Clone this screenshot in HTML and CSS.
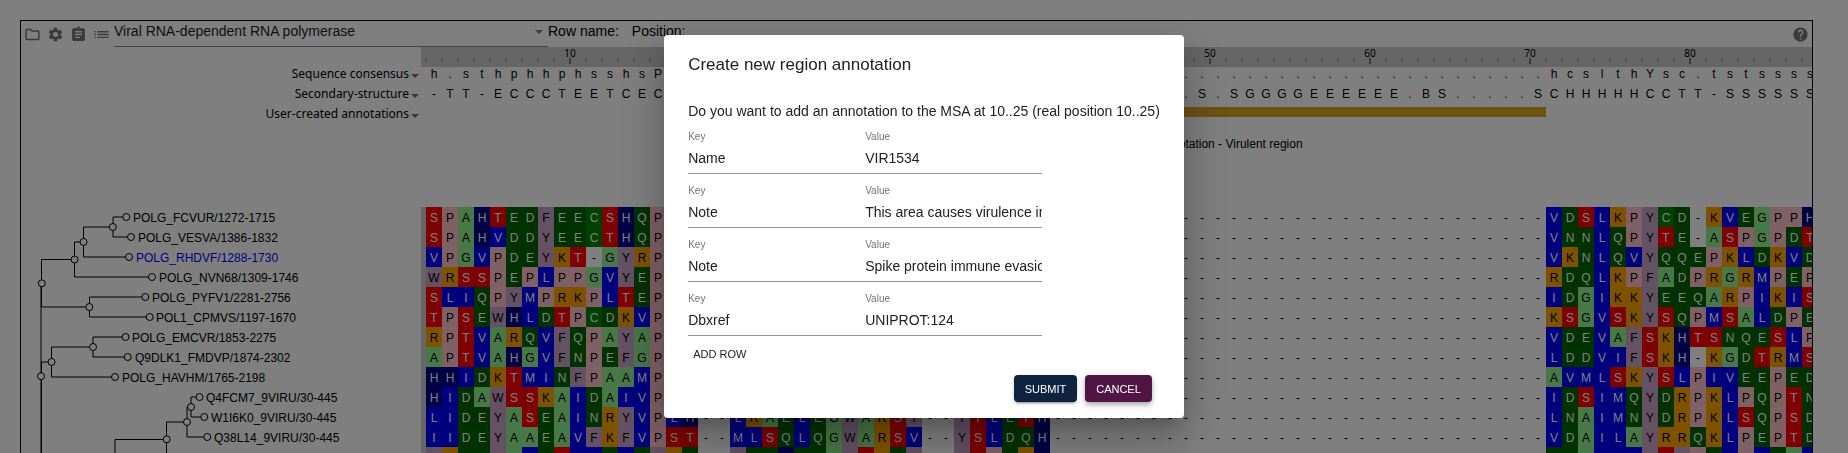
FILE: index.html
```html
<!DOCTYPE html>
<html lang="en">
<head>
<meta charset="utf-8">
<title>MSA viewer</title>
<link rel="stylesheet" href="styles.css">
</head>
<body>
<main class="viewer">
  <header class="toolbar">
    <button class="icon-btn" aria-label="Open"><svg viewBox="0 0 24 24"><path d="M9.17 6l2 2H20v10H4V6h5.17M10 4H4c-1.1 0-1.99.9-1.99 2L2 18c0 1.1.9 2 2 2h16c1.1 0 2-.9 2-2V8c0-1.1-.9-2-2-2h-8l-2-2z"/></svg></button>
    <button class="icon-btn" aria-label="Settings"><svg viewBox="0 0 24 24"><path d="M19.14 12.94c.04-.3.06-.61.06-.94 0-.32-.02-.64-.07-.94l2.03-1.58c.18-.14.23-.41.12-.61l-1.92-3.32c-.12-.22-.37-.29-.59-.22l-2.39.96c-.5-.38-1.03-.7-1.62-.94l-.36-2.54c-.04-.24-.24-.41-.48-.41h-3.84c-.24 0-.43.17-.47.41l-.36 2.54c-.59.24-1.13.57-1.62.94l-2.39-.96c-.22-.08-.47 0-.59.22L2.74 8.87c-.12.21-.08.47.12.61l2.03 1.58c-.05.3-.09.63-.09.94s.02.64.07.94l-2.03 1.58c-.18.14-.23.41-.12.61l1.92 3.32c.12.22.37.29.59.22l2.39-.96c.5.38 1.03.7 1.62.94l.36 2.54c.05.24.24.41.48.41h3.84c.24 0 .44-.17.47-.41l.36-2.54c.59-.24 1.13-.56 1.62-.94l2.39.96c.22.08.47 0 .59-.22l1.92-3.32c.12-.22.07-.47-.12-.61l-2.01-1.58zM12 15.6c-1.98 0-3.6-1.62-3.6-3.6s1.62-3.6 3.6-3.6 3.6 1.62 3.6 3.6-1.62 3.6-3.6 3.6z"/></svg></button>
    <button class="icon-btn" aria-label="Details"><svg viewBox="0 0 24 24"><path d="M19 3h-4.18C14.4 1.84 13.3 1 12 1c-1.3 0-2.4.84-2.82 2H5c-1.1 0-2 .9-2 2v14c0 1.1.9 2 2 2h14c1.1 0 2-.9 2-2V5c0-1.1-.9-2-2-2zm-7 0c.55 0 1 .45 1 1s-.45 1-1 1-1-.45-1-1 .45-1 1-1zm2 14H7v-2h7v2zm3-4H7v-2h10v2zm0-4H7V7h10v2z"/></svg></button>
    <button class="icon-btn" aria-label="Tracks"><svg viewBox="0 0 24 24"><path d="M2 13h2v-2H2v2zm0 4h2v-2H2v2zm0-8h2V7H2v2zm4 4h16v-2H6v2zm0 4h16v-2H6v2zM6 7v2h16V7H6z"/></svg></button>
    <div class="picker">
      <select aria-label="Alignment"><option>Viral RNA-dependent RNA polymerase</option></select>
      <svg class="caret" viewBox="0 0 8 4"><path d="M0 0h8L4 4z"/></svg>
    </div>
    <div class="status"><span>Row name:</span><span>Position:</span></div>
    <button class="icon-btn" aria-label="Help"><svg viewBox="0 0 24 24"><path d="M12 2C6.48 2 2 6.48 2 12s4.48 10 10 10 10-4.48 10-10S17.52 2 12 2zm1 17h-2v-2h2v2zm2.07-7.75l-.9.92C13.45 12.9 13 13.5 13 15h-2v-.5c0-1.1.45-2.1 1.17-2.83l1.24-1.26c.37-.36.59-.86.59-1.41 0-1.1-.9-2-2-2s-2 .9-2 2H8c0-2.21 1.79-4 4-4s4 1.79 4 4c0 .88-.36 1.68-.93 2.25z"/></svg></button>
  </header>

  <div class="panes">
    <section class="side">
      <div class="track-label">Sequence consensus<svg class="caret" viewBox="0 0 8 4"><path d="M0 0h8L4 4z"/></svg></div>
      <div class="track-label">Secondary-structure<svg class="caret" viewBox="0 0 8 4"><path d="M0 0h8L4 4z"/></svg></div>
      <div class="track-label">User-created annotations<svg class="caret" viewBox="0 0 8 4"><path d="M0 0h8L4 4z"/></svg></div>
      <svg class="tree" viewBox="21 127 400 340">
        <g class="branches">
          <path d="M126 217H113V237H131M113 227H83.5V257H129M83.5 242H74.5V277H152M74.5 259.5H41.5V307H89.5M145 297H89.5V317H150"/>
          <path d="M125.5 337H93V357H128M93 347H51.5V377H115M51.5 362H41.5V467M41 283V467"/>
          <path d="M199.5 397H191V417H204M191 407H187V437H207M187 422H166.5V467M166.5 439.5H115V467"/>
        </g>
        <g class="nodes">
          <circle cx="126.3" cy="217" r="3.5"/><circle cx="131" cy="237" r="3.5"/><circle cx="129" cy="257" r="3.5"/>
          <circle cx="152" cy="277" r="3.5"/><circle cx="145.3" cy="297" r="3.5"/><circle cx="149.7" cy="317" r="3.5"/>
          <circle cx="125.5" cy="337" r="3.5"/><circle cx="127.7" cy="357" r="3.5"/><circle cx="115" cy="377" r="3.5"/>
          <circle cx="199.5" cy="397" r="3.5"/><circle cx="204.3" cy="417" r="3.5"/><circle cx="207.3" cy="437" r="3.5"/>
          <circle cx="112.8" cy="227" r="3.5"/><circle cx="83.5" cy="242" r="3.5"/><circle cx="74.6" cy="259.5" r="3.5"/>
          <circle cx="41.8" cy="283.3" r="3.5"/><circle cx="89.3" cy="307" r="3.5"/><circle cx="93" cy="347" r="3.5"/>
          <circle cx="51.5" cy="362" r="3.5"/><circle cx="41" cy="376.2" r="3.5"/><circle cx="191" cy="407" r="3.5"/>
          <circle cx="187" cy="422" r="3.5"/><circle cx="166.7" cy="439.3" r="3.5"/>
        </g>
        <g class="leaves">
          <text x="133" y="222">POLG_FCVUR/1272-1715</text>
          <text x="138" y="242">POLG_VESVA/1386-1832</text>
          <text x="136" y="262" class="active">POLG_RHDVF/1288-1730</text>
          <text x="159" y="282">POLG_NVN68/1309-1746</text>
          <text x="152" y="302">POLG_PYFV1/2281-2756</text>
          <text x="156" y="322">POL1_CPMVS/1197-1670</text>
          <text x="132" y="342">POLG_EMCVR/1853-2275</text>
          <text x="135" y="362">Q9DLK1_FMDVP/1874-2302</text>
          <text x="122" y="382">POLG_HAVHM/1765-2198</text>
          <text x="206" y="402">Q4FCM7_9VIRU/30-445</text>
          <text x="211" y="422">W1I6K0_9VIRU/30-445</text>
          <text x="214" y="442">Q38L14_9VIRU/30-445</text>
        </g>
      </svg>
    </section>
    <section class="alignment">
      <div class="ruler" id="ruler"></div>
      <div class="track" id="consensus"></div>
      <div class="track" id="structure"></div>
      <div class="annotations">
        <div class="region"><div class="region-bar"></div><span>Region annotation - Virulent region</span></div>
      </div>
      <div class="msa" id="msa"></div>
    </section>
  </div>
</main>

<div class="backdrop">
  <form class="dialog" role="dialog" aria-modal="true" aria-labelledby="title">
    <h2 id="title">Create new region annotation</h2>
    <p>Do you want to add an annotation to the MSA at 10..25 (real position 10..25)</p>
    <div class="fields">
      <label>Key<input type="text" value="Name"></label>
      <label>Value<input type="text" value="VIR1534"></label>
      <label>Key<input type="text" value="Note"></label>
      <label>Value<input type="text" value="This area causes virulence in host"></label>
      <label>Key<input type="text" value="Note"></label>
      <label>Value<input type="text" value="Spike protein immune evasion"></label>
      <label>Key<input type="text" value="Dbxref"></label>
      <label>Value<input type="text" value="UNIPROT:124"></label>
    </div>
    <button type="button" class="btn text">ADD ROW</button>
    <div class="actions">
      <button type="button" class="btn primary">SUBMIT</button>
      <button type="button" class="btn secondary">CANCEL</button>
    </div>
  </form>
</div>
<script src="msa.js"></script>
</body>
</html>
```
FILE: styles.css
```css
* { box-sizing: border-box; }
body {
  margin: 0;
  background: #fff;
  color: #000;
  font: 14px/20px "Liberation Sans", Arial, sans-serif;
}
button, input, select { font: inherit; color: inherit; margin: 0; padding: 0; border: 0; background: none; }

.viewer {
  height: calc(100vh - 20px);
  margin: 20px 35px 0 20px;
  border: 1px solid #000;
  border-bottom: 0;
  overflow: hidden;
}

.toolbar { display: flex; height: 26px; }
.icon-btn { width: 23px; height: 26px; display: flex; align-items: center; justify-content: center; }
.icon-btn svg { width: 17px; height: 17px; fill: #757575; }
.picker { position: relative; width: 434px; margin-left: 1px; border-bottom: 1px solid #8a8a8a; }
.picker select { width: 100%; height: 20px; appearance: none; color: #212121; }
.picker .caret { position: absolute; right: 5px; top: 9px; }
.caret { width: 8px; height: 4px; fill: #757575; }
.status { flex: 1; display: flex; gap: 13px; line-height: 20px; }

.panes { display: grid; grid-template-columns: 400px minmax(0, 1fr); }
.side { padding-top: 20px; }
.track-label {
  display: flex;
  justify-content: flex-end;
  gap: 2px;
  height: 20px;
  padding-right: 2px;
  font: 12px/14px "Noto Sans", sans-serif;
}
.track-label .caret { margin-top: 7px; }
.tree { display: block; width: 400px; height: 340px; }
.branches { fill: none; stroke: #000; }
.nodes { fill: #fff; stroke: #000; }
.leaves { font-size: 12px; }
.active { fill: #00f; }

.alignment { overflow: hidden; }
.ruler { display: flex; height: 20px; padding-left: 4px; background: #ccc; }
.tick {
  position: relative;
  flex: none;
  width: 16px;
  margin-top: 11px;
  height: 4px;
  border-left: 2px solid #aaa;
}
.tick.major { height: 6px; border-color: #777; }
.tick span {
  position: absolute;
  left: -17px;
  top: -11px;
  width: 32px;
  text-align: center;
  font: 10px/12px "Noto Sans", sans-serif;
}
.track, .row { display: flex; height: 20px; font-size: 12px; line-height: 22px; }
.track { padding-left: 5px; line-height: 14px; }
.cell { flex: none; width: 16px; text-align: center; }
.annotations { height: 100px; padding-left: 453px; }
.region { width: 672px; text-align: center; font-size: 12px; }
.region-bar { height: 10px; margin-bottom: 17px; background: #daa520; }
.msa { border-left: 5px solid #ccc; }

.ag { background: #90ee90; }
.c { background: #008000; }
.denq { background: #006400; }
.ilmv { background: #00f; }
.fwy { background: #c8a2c8; }
.h { background: #00008b; }
.kr { background: #ffa500; }
.p { background: #ffc0cb; }
.st { background: #f00; }
.c, .denq, .ilmv, .h, .st { color: #fff; }

.backdrop {
  position: fixed;
  inset: 0;
  display: flex;
  align-items: center;
  justify-content: center;
  background: rgba(0, 0, 0, .5);
}
.dialog {
  padding: 0 24px 16px;
  border-radius: 4px;
  background: #fff;
  color: #212121;
  box-shadow: 0 11px 15px -7px rgba(0,0,0,.2), 0 24px 38px 3px rgba(0,0,0,.14), 0 9px 46px 8px rgba(0,0,0,.12);
}
.dialog h2 { margin: 0; padding: 18px 0 26px; font-size: 17px; line-height: 24px; font-weight: 400; }
.dialog p { margin: 0; line-height: 17px; }
.fields { display: grid; grid-template-columns: 177px 177px; }
.fields label { padding-top: 11px; font-size: 10px; line-height: 12px; color: #757575; }
.fields input {
  display: block;
  width: 100%;
  height: 31px;
  border-bottom: 1px solid #949494;
  font-size: 14px;
  color: #212121;
}
.btn { height: 27px; padding: 0 11px; border-radius: 4px; font-size: 11px; }
.btn.text { margin-top: 4px; padding: 0 5px; }
.actions { display: flex; justify-content: flex-end; gap: 8px; padding: 8px 8px 0 0; }
.primary, .secondary { color: #fff; box-shadow: 0 3px 1px -2px rgba(0,0,0,.2), 0 2px 2px rgba(0,0,0,.14), 0 1px 5px rgba(0,0,0,.12); }
.primary { background: #0d233f; }
.secondary { background: #501545; box-shadow: 0 2px 4px -1px rgba(0,0,0,.2), 0 4px 5px rgba(0,0,0,.14), 0 1px 10px rgba(0,0,0,.12); }
```
FILE: msa.js
```js
const COLS = 87;
const gap = (n, ch = "-") => ch.repeat(n);

const rows = [
  ["SPAHTEDFEECSHQP", gap(55), "VDSLKPYCD-KVEGPPH"],
  ["SPAHVDDYEECTHQP", gap(55), "VNNLQPYTE-ASPGPDT"],
  ["VPGVPDEYKT-GYRP", gap(55), "VKNLQVYQQEPKLDKVD"],
  ["WRSSPEPLPPGVYEP", gap(55), "RDQLKPFADPRGRMPEP"],
  ["SLIQPYMPRKPLTEP", gap(55), "IDGIKKYEEQARPIKIS"],
  ["TPSEWHLDTPCDKVP", gap(55), "KSGVSKYSQPMSALDPE"],
  ["RPTVARQVFQPAYAP", gap(55), "VDEVAFSKHTSNQESLP"],
  ["APTVAHGVFNPEFGP", gap(55), "LDDVIFSKH-KGDTRMS"],
  ["HHIDKTMINFPAAMP", gap(55), "AVMLSKYSLPIVEEPED"],
  ["HIDAWSSKAIDAIVP", gap(55), "IDSIMQYDRPKLPQPTN"],
  ["LIDEYASEAINRYVP", "LH--LRAELEGWARSY--YTLETH" + gap(31), "LNAIMNYDRPKLSQPSD"],
  ["IIDEYAAEAVFKFVP", "ST--MLSQLQGWARSV--YSLDQH" + gap(31), "VDAILAYRRQKLPEPTD"],
  ["YKDDYALESIIDLEY", "KE--YEEHEEGWSREY--YSPEKH" + gap(31), "EDALLLYTYPEIPIEAI"],
];

const classes = ["AG", "C", "DENQ", "ILMV", "FWY", "H", "KR", "P", "ST"];
const classFor = ch => (classes.find(c => c.includes(ch)) || "").toLowerCase();

function fill(parent, text, colored) {
  for (const ch of text) {
    const cell = document.createElement("span");
    cell.className = colored ? ("cell " + classFor(ch)).trim() : "cell";
    cell.textContent = ch;
    parent.append(cell);
  }
}

const ruler = document.getElementById("ruler");
for (let i = 1; i <= COLS; i++) {
  const tick = document.createElement("div");
  tick.className = i % 10 ? "tick" : "tick major";
  if (i % 10 === 0) {
    const label = document.createElement("span");
    label.textContent = i;
    tick.append(label);
  }
  ruler.append(tick);
}

fill(document.getElementById("consensus"), "h.sthphhphsshsP" + gap(55, ".") + "hcslthYsc.tstssss");
fill(document.getElementById("structure"), "-TT-ECCCTEETCEC" + gap(33, ".") + "S.SGGGGEEEEEE.BS.....SCHHHHHCCTT-SSSSSS");

const msa = document.getElementById("msa");
for (const parts of rows) {
  const row = document.createElement("div");
  row.className = "row";
  fill(row, parts.join(""), true);
  msa.append(row);
}
```
